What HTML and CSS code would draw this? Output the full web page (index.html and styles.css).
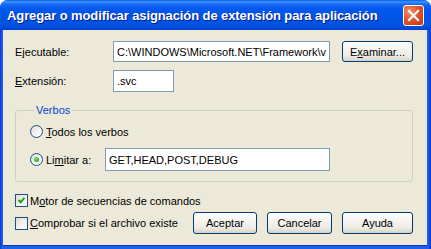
FILE: index.html
```html
<!DOCTYPE html>
<html lang="es">
<head>
<meta charset="UTF-8">
<meta name="viewport" content="width=device-width, initial-scale=1.0">
<title>Agregar o modificar asignación de extensión para aplicación</title>
<link rel="stylesheet" href="styles.css">
</head>
<body>
<div class="window">
    <div class="titlebar">
        <span class="title">Agregar o modificar asignación de extensión para aplicación</span>
        <button class="close" aria-label="Cerrar">
            <svg width="13" height="13" viewBox="0 0 13 13"><path d="M2 2 L11 11 M11 2 L2 11" stroke="#fff" stroke-width="2.2" stroke-linecap="square"/></svg>
        </button>
    </div>
    <div class="client">
        <div class="row">
            <label class="label">Ejecutable:</label>
            <input class="text exe" value="C:\WINDOWS\Microsoft.NET\Framework\v2.0.50727\aspnet_isapi.dll">
            <button class="btn browse">E<u>x</u>aminar...</button>
        </div>
        <div class="row second">
            <label class="label"><u>E</u>xtensión:</label>
            <input class="text ext" value=".svc">
        </div>
        <fieldset class="group">
            <legend>Verbos</legend>
            <div class="option">
                <span class="radio"></span>
                <span><u>T</u>odos los verbos</span>
            </div>
            <div class="option limit">
                <span class="radio checked"></span>
                <span class="limit-label">Li<u>m</u>itar a:</span>
                <input class="text verbs" value="GET,HEAD,POST,DEBUG">
            </div>
        </fieldset>
        <div class="check-row first">
            <span class="check">
                <svg width="11" height="11" viewBox="0 0 11 11"><path d="M2.5 5 L4.5 7.2 L8.5 2.8" fill="none" stroke="#21a121" stroke-width="2"/></svg>
            </span>
            <span>M<u>o</u>tor de secuencias de comandos</span>
        </div>
        <div class="bottom">
            <div class="check-row">
                <span class="check"></span>
                <span><u>C</u>omprobar si el archivo existe</span>
            </div>
            <div class="buttons">
                <button class="btn ok">Aceptar</button>
                <button class="btn cancel">Cancelar</button>
                <button class="btn help">Ayuda</button>
            </div>
        </div>
    </div>
</div>
</body>
</html>
```

FILE: styles.css
```css
body {
    margin: 0;
    font-family: "Liberation Sans", Arial, sans-serif;
    font-size: 11px;
    color: #000;
    background: #fff;
}
.window {
    width: 431px;
    height: 249px;
    box-sizing: border-box;
    display: flex;
    flex-direction: column;
    background: linear-gradient(to right, #0831d9 0, #1b60ec 2px, #1b60ec 428px, #0831d9 431px);
    border-radius: 8px 8px 0 0;
    overflow: hidden;
}
.titlebar {
    height: 30px;
    flex: none;
    display: flex;
    align-items: center;
    justify-content: space-between;
    padding: 0 7px 0 7px;
    background: linear-gradient(to bottom, #0a5fe8 0, #3d95ff 2px, #1a6cf5 4px, #0058ee 9px, #0055e5 16px, #0054e3 22px, #004fdc 27px, #003fd0 30px);
}
.title {
    color: #fff;
    font-weight: bold;
    font-size: 13px;
    letter-spacing: -0.1px;
    text-shadow: 1px 1px 0 #0a1a8c;
    padding-top: 1px;
}
.close {
    width: 21px;
    height: 21px;
    padding: 0;
    border: 1px solid #fff;
    border-radius: 3px;
    background: radial-gradient(circle at 30% 30%, #f0926c 0, #e2552c 45%, #c53611 100%);
    display: flex;
    align-items: center;
    justify-content: center;
}
.client {
    flex: 1;
    margin: 0 4px 4px 3px;
    background: #ece9d8;
    padding: 11px 14px 0 12px;
    box-shadow: 0 1px 0 #0c34c8;
}
.row {
    display: flex;
    align-items: center;
    height: 21px;
}
.row.second {
    margin-top: 8px;
    height: 22px;
}
.label {
    width: 98px;
    flex: none;
}
.text {
    box-sizing: border-box;
    height: 21px;
    border: 1px solid #7f9db9;
    background: #fff;
    font: inherit;
    color: #000;
    padding: 0 3px;
    margin: 0;
    outline: none;
}
.exe {
    width: 217px;
}
.ext {
    width: 61px;
    height: 22px;
}
.btn {
    box-sizing: border-box;
    height: 22px;
    border: 1px solid #003c74;
    border-radius: 3px;
    background: linear-gradient(to bottom, #ffffff 0, #f4f3ee 40%, #ecebe4 75%, #d8d2c6 100%);
    font: inherit;
    color: #000;
    padding: 0;
    margin: 0;
}
.browse {
    width: 71px;
    height: 21px;
    margin-left: 12px;
}
.group {
    margin: 12px 0 0 0;
    padding: 8px 0 10px 14px;
    border: 1px solid #d0d0bf;
    border-radius: 3px;
    min-width: 0;
}
.group legend {
    color: #0046d5;
    padding: 0 2px;
    margin-left: 4px;
    line-height: 13px;
}
.option {
    display: flex;
    align-items: center;
    height: 13px;
}
.option.limit {
    height: 23px;
    margin-top: 10px;
}
.radio {
    width: 13px;
    height: 13px;
    box-sizing: border-box;
    border: 1px solid #1c5180;
    border-radius: 50%;
    background: linear-gradient(135deg, #dcdcd7 0, #f4f4f0 60%, #ffffff 100%);
    margin-right: 3px;
    flex: none;
    display: flex;
    align-items: center;
    justify-content: center;
}
.radio.checked::after {
    content: "";
    width: 5px;
    height: 5px;
    border-radius: 50%;
    background: radial-gradient(circle at 35% 35%, #7ee37a 0, #21a121 80%);
}
.limit-label {
    width: 59px;
}
.verbs {
    width: 225px;
    height: 23px;
}
.check-row {
    display: flex;
    align-items: center;
    height: 13px;
}
.check-row.first {
    margin-top: 12px;
}
.check {
    width: 13px;
    height: 13px;
    box-sizing: border-box;
    border: 1px solid #1c5180;
    background: linear-gradient(135deg, #dcdcd7 0, #f4f4f0 60%, #ffffff 100%);
    margin-right: 2px;
    display: flex;
    align-items: center;
    justify-content: center;
    flex: none;
}
.bottom {
    display: flex;
    align-items: center;
    justify-content: space-between;
    margin-top: 5px;
    height: 22px;
}
.buttons {
    display: flex;
    gap: 10px;
}
.ok {
    width: 64px;
}
.cancel {
    width: 65px;
}
.help {
    width: 71px;
}
```
